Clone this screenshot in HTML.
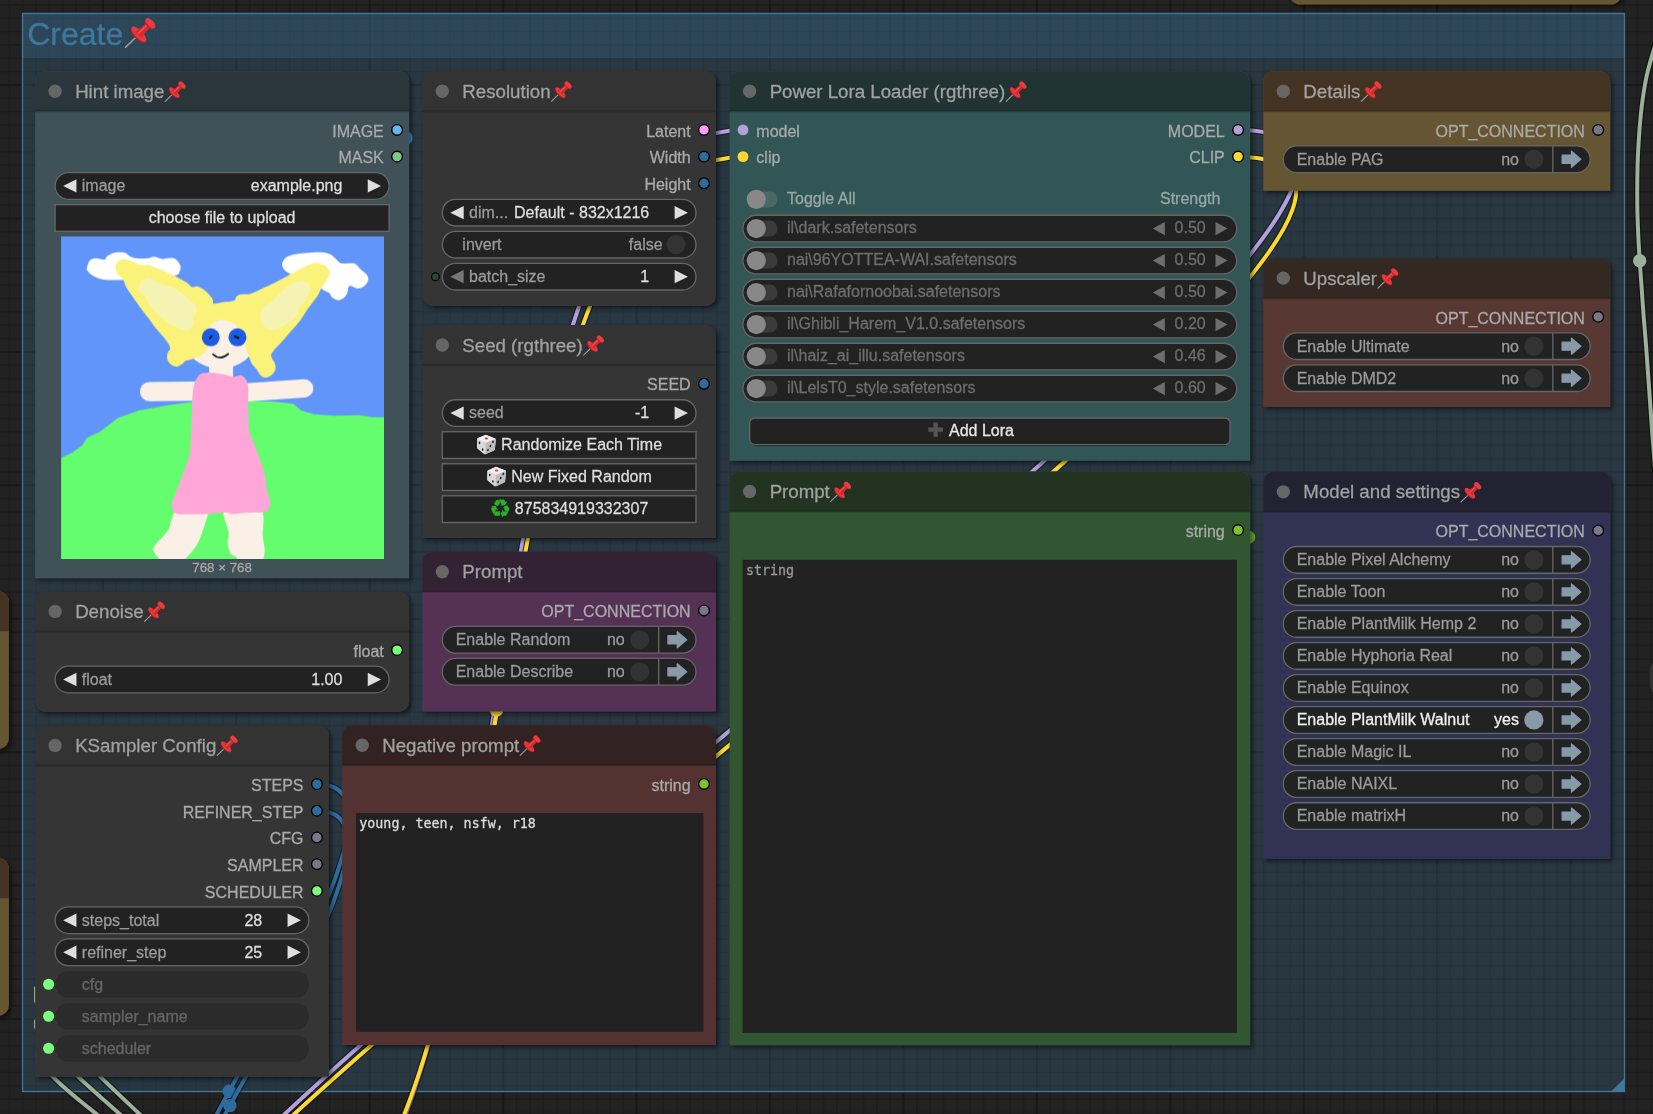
<!DOCTYPE html>
<html lang="en"><head><meta charset="utf-8"><title>ComfyUI - Create</title>
<style>html,body{margin:0;padding:0;background:#222;overflow:hidden}body{width:1653px;height:1114px}svg{display:block;will-change:transform}text{stroke-width:.28px;font-family:"Liberation Sans",Arial,sans-serif;white-space:pre}text.mono{font-family:"DejaVu Sans Mono","Liberation Mono",monospace}text.dj{font-family:"DejaVu Sans",sans-serif}</style></head>
<body>
<svg width="1653" height="1114" viewBox="0 0 1653 1114">
<defs><clipPath id="cl2"><rect x="36" y="0" width="1700" height="1200"/></clipPath><clipPath id="cl"><rect x="33.9" y="0" width="1700" height="1200"/></clipPath><filter id="sh" x="-5%" y="-5%" width="115%" height="115%" filterUnits="objectBoundingBox"><feDropShadow dx="2.67" dy="2.67" stdDeviation="2" flood-color="#000" flood-opacity=".5"/></filter></defs>
<rect width="1653" height="1114" fill="#222222"/>
<path d="M9.45 0V1114M22.79 0V1114M36.14 0V1114M49.48 0V1114M62.82 0V1114M76.17 0V1114M89.51 0V1114M116.2 0V1114M129.54 0V1114M142.89 0V1114M156.23 0V1114M169.57 0V1114M182.92 0V1114M196.26 0V1114M209.6 0V1114M222.95 0V1114M249.63 0V1114M262.98 0V1114M276.32 0V1114M289.66 0V1114M303.01 0V1114M316.35 0V1114M329.69 0V1114M343.04 0V1114M356.38 0V1114M383.07 0V1114M396.41 0V1114M409.76 0V1114M423.1 0V1114M436.44 0V1114M449.79 0V1114M463.13 0V1114M476.47 0V1114M489.82 0V1114M516.5 0V1114M529.85 0V1114M543.19 0V1114M556.53 0V1114M569.88 0V1114M583.22 0V1114M596.56 0V1114M609.91 0V1114M623.25 0V1114M649.94 0V1114M663.28 0V1114M676.62 0V1114M689.97 0V1114M703.31 0V1114M716.66 0V1114M730 0V1114M743.34 0V1114M756.69 0V1114M783.37 0V1114M796.72 0V1114M810.06 0V1114M823.4 0V1114M836.75 0V1114M850.09 0V1114M863.43 0V1114M876.78 0V1114M890.12 0V1114M916.81 0V1114M930.15 0V1114M943.49 0V1114M956.84 0V1114M970.18 0V1114M983.53 0V1114M996.87 0V1114M1010.21 0V1114M1023.56 0V1114M1050.24 0V1114M1063.59 0V1114M1076.93 0V1114M1090.27 0V1114M1103.62 0V1114M1116.96 0V1114M1130.3 0V1114M1143.65 0V1114M1156.99 0V1114M1183.68 0V1114M1197.02 0V1114M1210.36 0V1114M1223.71 0V1114M1237.05 0V1114M1250.4 0V1114M1263.74 0V1114M1277.08 0V1114M1290.43 0V1114M1317.11 0V1114M1330.46 0V1114M1343.8 0V1114M1357.14 0V1114M1370.49 0V1114M1383.83 0V1114M1397.17 0V1114M1410.52 0V1114M1423.86 0V1114M1450.55 0V1114M1463.89 0V1114M1477.23 0V1114M1490.58 0V1114M1503.92 0V1114M1517.27 0V1114M1530.61 0V1114M1543.95 0V1114M1557.3 0V1114M1583.98 0V1114M1597.33 0V1114M1610.67 0V1114M1624.01 0V1114M1637.36 0V1114M1650.7 0V1114M0 4.95H1653M0 18.29H1653M0 31.64H1653M0 44.98H1653M0 58.32H1653M0 71.67H1653M0 98.35H1653M0 111.7H1653M0 125.04H1653M0 138.39H1653M0 151.73H1653M0 165.07H1653M0 178.42H1653M0 191.76H1653M0 205.1H1653M0 231.79H1653M0 245.13H1653M0 258.48H1653M0 271.82H1653M0 285.16H1653M0 298.51H1653M0 311.85H1653M0 325.19H1653M0 338.54H1653M0 365.22H1653M0 378.57H1653M0 391.91H1653M0 405.26H1653M0 418.6H1653M0 431.94H1653M0 445.29H1653M0 458.63H1653M0 471.97H1653M0 498.66H1653M0 512H1653M0 525.35H1653M0 538.69H1653M0 552.03H1653M0 565.38H1653M0 578.72H1653M0 592.06H1653M0 605.41H1653M0 632.09H1653M0 645.44H1653M0 658.78H1653M0 672.12H1653M0 685.47H1653M0 698.81H1653M0 712.16H1653M0 725.5H1653M0 738.84H1653M0 765.53H1653M0 778.87H1653M0 792.22H1653M0 805.56H1653M0 818.9H1653M0 832.25H1653M0 845.59H1653M0 858.93H1653M0 872.28H1653M0 898.96H1653M0 912.31H1653M0 925.65H1653M0 938.99H1653M0 952.34H1653M0 965.68H1653M0 979.03H1653M0 992.37H1653M0 1005.71H1653M0 1032.4H1653M0 1045.74H1653M0 1059.09H1653M0 1072.43H1653M0 1085.77H1653M0 1099.12H1653M0 1112.46H1653" stroke="#1d1d1d" stroke-width="1.33" fill="none"/>
<path d="M102.85 0V1114M236.29 0V1114M369.72 0V1114M503.16 0V1114M636.59 0V1114M770.03 0V1114M903.46 0V1114M1036.9 0V1114M1170.33 0V1114M1303.77 0V1114M1437.2 0V1114M1570.64 0V1114M0 85.01H1653M0 218.45H1653M0 351.88H1653M0 485.32H1653M0 618.75H1653M0 752.19H1653M0 885.62H1653M0 1019.06H1653" stroke="#181818" stroke-width="2" fill="none"/>

<!-- group -->
<rect x="22.55" y="13.45" width="1601.9" height="44.83" fill="#3f789e" fill-opacity=".25"/>
<rect x="22.55" y="13.45" width="1601.9" height="1078.05" fill="#3f789e" fill-opacity=".25"/>
<rect x="22.55" y="13.45" width="1601.9" height="1078.05" fill="none" stroke="#3f789e" stroke-width="1.33"/>
<path d="M1624.45 1091.5h-13.34L1624.45 1078.16Z" fill="#3f789e"/>
<text x="27.22" y="44.8" font-size="32.02" fill="#3f789e" stroke="#3f789e">Create</text>
<g transform="translate(125.34,16.8) scale(1)"><g transform="translate(13.6 17.5) rotate(46)"><path d="M0 1L0 18.6" stroke="#98a1ab" stroke-width="1.6" stroke-linecap="round"/><ellipse cx="0" cy="1.3" rx="10" ry="3.9" fill="#b81c1c"/><ellipse cx="0" cy="0" rx="10" ry="3.9" fill="#e5393b"/><path d="M-4.6 0.6Q-2.6 -6 -3.4 -15L3.4 -15Q2.6 -6 4.6 0.6Z" fill="#d8282b"/><path d="M-1.9 0L-1.7 -15L-0.3 -15L-0.4 0Z" fill="#f47a7a" opacity=".6"/><ellipse cx="0" cy="-14.6" rx="6.3" ry="3.2" fill="#c42124"/><ellipse cx="0" cy="-16" rx="6.3" ry="3.2" fill="#ea3d40"/></g></g>

<!-- links -->
<g clip-path="url(#cl)">
<path d="M283.7 1293.6C380.85 1293.6 -48.55 984.2 48.6 984.2" fill="none" stroke="#000" stroke-opacity=".42" stroke-width="6.4" clip-path="url(#cl2)"/>
<path d="M283.7 1293.6C380.85 1293.6 -48.55 984.2 48.6 984.2" fill="none" stroke="#9cb09b" stroke-width="4"/>
<path d="M282.7 1290.8C372.95 1290.8 -41.65 1016 48.6 1016" fill="none" stroke="#000" stroke-opacity=".42" stroke-width="6.4" clip-path="url(#cl2)"/>
<path d="M282.7 1290.8C372.95 1290.8 -41.65 1016 48.6 1016" fill="none" stroke="#9cb09b" stroke-width="4"/>
<path d="M283 1286C366.51 1286 -34.91 1048 48.6 1048" fill="none" stroke="#000" stroke-opacity=".42" stroke-width="6.4" clip-path="url(#cl2)"/>
<path d="M283 1286C366.51 1286 -34.91 1048 48.6 1048" fill="none" stroke="#9cb09b" stroke-width="4"/>
</g>
<path d="M1664 20C1662.22 25.28 1656.18 42.38 1653.3 51.7C1650.42 61.02 1648.55 67.38 1646.7 75.9C1644.85 84.42 1643.4 93.82 1642.2 102.8C1641 111.78 1640.27 119.52 1639.5 129.8C1638.73 140.08 1637.97 151.8 1637.6 164.5C1637.23 177.2 1637.17 193.75 1637.3 206C1637.43 218.25 1638 228.88 1638.4 238C1638.8 247.12 1639.13 252.03 1639.7 260.7C1640.27 269.37 1641.18 281.28 1641.8 290C1642.42 298.72 1642.6 302.5 1643.4 313C1644.2 323.5 1645.12 332.83 1646.6 353C1648.08 373.17 1650.73 412.83 1652.3 434C1653.87 455.17 1655.38 472.33 1656 480" fill="none" stroke="#000" stroke-opacity=".42" stroke-width="6.4"/>
<path d="M1664 20C1662.22 25.28 1656.18 42.38 1653.3 51.7C1650.42 61.02 1648.55 67.38 1646.7 75.9C1644.85 84.42 1643.4 93.82 1642.2 102.8C1641 111.78 1640.27 119.52 1639.5 129.8C1638.73 140.08 1637.97 151.8 1637.6 164.5C1637.23 177.2 1637.17 193.75 1637.3 206C1637.43 218.25 1638 228.88 1638.4 238C1638.8 247.12 1639.13 252.03 1639.7 260.7C1640.27 269.37 1641.18 281.28 1641.8 290C1642.42 298.72 1642.6 302.5 1643.4 313C1644.2 323.5 1645.12 332.83 1646.6 353C1648.08 373.17 1650.73 412.83 1652.3 434C1653.87 455.17 1655.38 472.33 1656 480" fill="none" stroke="#9cb09b" stroke-width="4"/>
<circle cx="1639.7" cy="260.7" r="6.7" fill="#9cb09b"/>
<path d="M317 784.1C476.75 784.1 -18.35 1398.5 141.4 1398.5" fill="none" stroke="#000" stroke-opacity=".42" stroke-width="6.4"/>
<path d="M317 784.1C476.75 784.1 -18.35 1398.5 141.4 1398.5" fill="none" stroke="#2e6c9f" stroke-width="4"/>
<circle cx="229.2" cy="1091.3" r="6.7" fill="#2e6c9f"/>
<path d="M317 810.8C470.7 810.8 -10.9 1400.4 142.8 1400.4" fill="none" stroke="#000" stroke-opacity=".42" stroke-width="6.4"/>
<path d="M317 810.8C470.7 810.8 -10.9 1400.4 142.8 1400.4" fill="none" stroke="#2e6c9f" stroke-width="4"/>
<circle cx="229.9" cy="1105.6" r="6.7" fill="#2e6c9f"/>
<circle cx="405" cy="138" r="7.6" fill="#3f8fcc"/>
<circle cx="1248.5" cy="537.3" r="6.7" fill="#6fb025"/>
<path d="M248.9 1270.9C559.72 1270.9 432.18 130 743 130" fill="none" stroke="#000" stroke-opacity=".42" stroke-width="6.4"/>
<path d="M248.9 1270.9C559.72 1270.9 432.18 130 743 130" fill="none" stroke="#b39fda" stroke-width="4"/>
<path d="M1238 130C1655.09 130 -269.29 1392.9 147.8 1392.9" fill="none" stroke="#000" stroke-opacity=".42" stroke-width="6.4"/>
<path d="M1238 130C1655.09 130 -269.29 1392.9 147.8 1392.9" fill="none" stroke="#b39fda" stroke-width="4"/>
<path d="M1238 157C1648.23 157 -256.33 1388.8 153.9 1388.8" fill="none" stroke="#000" stroke-opacity=".42" stroke-width="6.4"/>
<path d="M1238 157C1648.23 157 -256.33 1388.8 153.9 1388.8" fill="none" stroke="#fdd830" stroke-width="4"/>
<path d="M251.3 1263.3C553.96 1263.3 440.34 157 743 157" fill="none" stroke="#000" stroke-opacity=".42" stroke-width="6.4"/>
<path d="M251.3 1263.3C553.96 1263.3 440.34 157 743 157" fill="none" stroke="#fdd830" stroke-width="4"/>
<circle cx="496.5" cy="710" r="6.7" fill="#fdd830"/>

<!-- nodes -->
<path d="M-189.33 591.3H-1.77A10.67 10.67 0 0 1 8.9 601.97V738.13A10.67 10.67 0 0 1 -1.77 748.8H-189.33A10.67 10.67 0 0 1 -200 738.13V601.97A10.67 10.67 0 0 1 -189.33 591.3Z" fill="#665533" filter="url(#sh)"/>
<path d="M-189.33 591.3H-1.77A10.67 10.67 0 0 1 8.9 601.97V631.33H-200V601.97A10.67 10.67 0 0 1 -189.33 591.3Z" fill="#443322"/>
<path d="M-189.33 858.1H-1.77A10.67 10.67 0 0 1 8.9 868.77V1004.93A10.67 10.67 0 0 1 -1.77 1015.6H-189.33A10.67 10.67 0 0 1 -200 1004.93V868.77A10.67 10.67 0 0 1 -189.33 858.1Z" fill="#665533" filter="url(#sh)"/>
<path d="M-189.33 858.1H-1.77A10.67 10.67 0 0 1 8.9 868.77V898.13H-200V868.77A10.67 10.67 0 0 1 -189.33 858.1Z" fill="#443322"/>
<path d="M1300.17 -300H1610.83A10.67 10.67 0 0 1 1621.5 -289.33V-6.07A10.67 10.67 0 0 1 1610.83 4.6H1300.17A10.67 10.67 0 0 1 1289.5 -6.07V-289.33A10.67 10.67 0 0 1 1300.17 -300Z" fill="#665533" filter="url(#sh)"/>
<path d="M1300.17 -300H1610.83A10.67 10.67 0 0 1 1621.5 -289.33V-259.97H1289.5V-289.33A10.67 10.67 0 0 1 1300.17 -300Z" fill="#443322"/>
<rect x="1649.8" y="657.5" width="60" height="40" rx="14" fill="#333" filter="url(#sh)"/>
<path d="M45.77 71.2H398.43A10.67 10.67 0 0 1 409.1 81.87V578.3H35.1V81.87A10.67 10.67 0 0 1 45.77 71.2Z" fill="#3f5159" filter="url(#sh)"/>
<path d="M45.77 71.2H398.43A10.67 10.67 0 0 1 409.1 81.87V111.23H35.1V81.87A10.67 10.67 0 0 1 45.77 71.2Z" fill="#2a363b"/>
<rect x="35.1" y="110.13" width="374" height="2.2" fill="#000" fill-opacity=".17"/>
<circle cx="55.11" cy="91.21" r="6.67" fill="#666"/>
<text x="75.13" y="97.89" font-size="18.68" fill="#a2a2a2" stroke="#a2a2a2">Hint image</text>
<g transform="translate(165.12,80.59) scale(0.68)"><g transform="translate(13.6 17.5) rotate(46)"><path d="M0 1L0 18.6" stroke="#98a1ab" stroke-width="1.6" stroke-linecap="round"/><ellipse cx="0" cy="1.3" rx="10" ry="3.9" fill="#b81c1c"/><ellipse cx="0" cy="0" rx="10" ry="3.9" fill="#e5393b"/><path d="M-4.6 0.6Q-2.6 -6 -3.4 -15L3.4 -15Q2.6 -6 4.6 0.6Z" fill="#d8282b"/><path d="M-1.9 0L-1.7 -15L-0.3 -15L-0.4 0Z" fill="#f47a7a" opacity=".6"/><ellipse cx="0" cy="-14.6" rx="6.3" ry="3.2" fill="#c42124"/><ellipse cx="0" cy="-16" rx="6.3" ry="3.2" fill="#ea3d40"/></g></g>
<circle cx="397.1" cy="129.91" r="5.34" fill="#67b5f5" stroke="#000" stroke-width="1.33"/>
<text x="383.76" y="136.66" font-size="16.01" fill="#aaaaaa" stroke="#aaaaaa" text-anchor="end">IMAGE</text>
<circle cx="397.1" cy="156.6" r="5.34" fill="#83c786" stroke="#000" stroke-width="1.33"/>
<text x="383.76" y="163.35" font-size="16.01" fill="#aaaaaa" stroke="#aaaaaa" text-anchor="end">MASK</text>
<rect x="55.11" y="172.61" width="333.97" height="26.69" rx="13.34" fill="#222222" stroke="#666666" stroke-width="1.33"/>
<path d="M76.46 179.28L63.12 185.95L76.46 192.62Z" fill="#dedede"/>
<path d="M367.74 179.28L381.08 185.95L367.74 192.62Z" fill="#dedede"/>
<text x="81.8" y="191.29" font-size="16.01" fill="#9b9b9b" stroke="#9b9b9b">image</text>
<text x="342.38" y="191.29" font-size="16.01" fill="#dedede" stroke="#dedede" text-anchor="end">example.png</text>
<rect x="55.11" y="204.63" width="333.97" height="26.69" fill="#222222" stroke="#666666" stroke-width="1.33"/>
<text x="222.1" y="223.31" font-size="16.01" fill="#dedede" stroke="#dedede" text-anchor="middle">choose file to upload</text>
<svg x="61.1" y="236.5" width="322.2" height="322.2" viewBox="0 0 322 322"><rect width="322" height="322" fill="#6195f9"/><path d="M26 30.4C26.43 28.7 27.45 25.25 28.9 23.8C30.35 22.35 32.28 21.82 34.7 21.7C37.12 21.58 41.48 23.47 43.4 23.1C45.32 22.73 44.52 20.65 46.2 19.5C47.88 18.35 50.6 16.75 53.5 16.2C56.4 15.65 60.95 15.53 63.6 16.2C66.25 16.87 67.47 19.28 69.4 20.2C71.33 21.12 72.32 21.45 75.2 21.7C78.08 21.95 83.82 21.95 86.7 21.7C89.58 21.45 90.08 20.08 92.5 20.2C94.92 20.32 98.78 22.15 101.2 22.4C103.62 22.65 104.83 21.7 107 21.7C109.17 21.7 112.17 21.2 114.2 22.4C116.23 23.6 118.48 26.85 119.2 28.9C119.92 30.95 119.33 33.07 118.5 34.7C117.67 36.33 118.95 37.82 114.2 38.7C109.45 39.58 99.03 39.22 90 40C80.97 40.78 68.25 42.97 60 43.4C51.75 43.83 45.43 43.45 40.5 42.6C35.57 41.75 32.77 39.73 30.4 38.3C28.03 36.87 27.03 35.32 26.3 34C25.57 32.68 25.57 32.1 26 30.4Z" fill="#fff"/><path d="M221 28.9C220.57 27.03 221.32 25.37 222.4 23.8C223.48 22.23 224.73 20.62 227.5 19.5C230.27 18.38 235.15 17.7 239 17.1C242.85 16.5 246.73 16.1 250.6 15.9C254.47 15.7 259.07 15.53 262.2 15.9C265.33 16.27 267.23 16.9 269.4 18.1C271.57 19.3 273.52 21.67 275.2 23.1C276.88 24.53 277.33 26.1 279.5 26.7C281.67 27.3 285.78 26.57 288.2 26.7C290.62 26.83 292.08 26.42 294 27.5C295.92 28.58 297.78 31.4 299.7 33.2C301.62 35 304.28 36.6 305.5 38.3C306.72 40 307.35 41.6 307 43.4C306.65 45.2 305.08 47.67 303.4 49.1C301.72 50.53 298.95 51.87 296.9 52C294.85 52.13 292.67 50.25 291.1 49.9C289.53 49.55 288.35 48.82 287.5 49.9C286.65 50.98 286.85 54.48 286 56.4C285.15 58.32 283.97 60.2 282.4 61.4C280.83 62.6 278.53 63.72 276.6 63.6C274.67 63.48 272.25 61.9 270.8 60.7C269.35 59.5 269.33 57.6 267.9 56.4C266.47 55.2 265.18 55.4 262.2 53.5C259.22 51.6 254.53 47.25 250 45C245.47 42.75 239.17 41.67 235 40C230.83 38.33 227.33 36.85 225 35C222.67 33.15 221.43 30.77 221 28.9Z" fill="#fff"/><polygon points="-3,222.3 0,222.3 11.7,216.5 21.4,209.6 26.3,201.9 39,196 56.5,182.4 77.9,174.6 105.2,169.7 132.4,165.8 187,164.8 214.3,165.8 231.8,167.8 239.6,174.6 253.2,178.5 272.7,180 298,179.5 311.6,181.4 322,181.4 326,181.4 326,326 -3,326" fill="#64fd6e" stroke="#64fd6e" stroke-width="1.5" stroke-linejoin="round"/><path d="M114.9 275C109.7 277.59 109.95 288.87 107.1 293.4C104.25 297.93 95.45 306.15 93.5 309C91.55 311.85 91.98 313.12 92.5 314.8C93.02 316.48 95.87 320.11 97.4 321.6C98.93 323.09 100.99 325.41 104 326C107.01 326.59 117.24 326.59 120 326C122.76 325.41 123.05 323.35 124.7 321.6C126.35 319.85 130.59 315.37 132.4 312.9C134.21 310.43 136.47 307.51 138.3 303.1C140.13 298.69 145.06 283.68 146.1 279.8C147.14 275.92 150.26 274.64 146.1 274C141.94 273.36 120.1 272.41 114.9 275Z" fill="#faf0e6"/><path d="M163.6 273C159.32 275.97 167.11 290.77 167.5 295.3C167.89 299.83 166.23 304.13 166.5 307C166.77 309.87 168.33 314.97 169.5 316.8C170.67 318.63 173.9 319.47 175.3 320.7C176.7 321.93 176.71 325.29 180 326C183.29 326.71 196.99 326.71 200 326C203.01 325.29 202.13 322.45 202.6 320.7C203.07 318.95 203.63 315.77 203.5 312.9C203.37 310.03 202.12 304.52 201.6 299.2C201.08 293.88 204.67 276.49 199.6 273C194.53 269.51 167.88 270.03 163.6 273Z" fill="#faf0e6"/><path d="M88.4 155L136 154.5" stroke="#faf0e6" stroke-width="19.3" stroke-linecap="round"/><path d="M186 155.8L243 151.8" stroke="#faf0e6" stroke-width="18.2" stroke-linecap="round"/><rect x="148" y="120" width="23.8" height="26" fill="#faf0e6"/><ellipse cx="159" cy="102" rx="36" ry="30" fill="#faf0e6"/><path d="M132.5 150C132.87 148.02 133.76 145.34 134.4 144C135.04 142.66 137.07 139.38 138 138.5C138.93 137.62 140.97 136.8 142.4 136.5C143.84 136.2 148.13 135.78 150.3 135.9C152.47 136.02 158.4 137 161 137.5C163.6 138 170.41 140.06 172.6 140.2C174.79 140.34 178.38 138.36 179.8 138.7C181.22 139.04 183.96 141.75 184.8 143.1C185.64 144.45 186.74 147.08 187 150.3C187.26 153.52 186.88 165.59 187 170.7C187.12 175.81 187.09 189.33 188 194.1C188.91 198.87 192.99 206.61 194.8 211.6C196.61 216.59 202.25 232.13 203.5 236.9C204.75 241.67 204.93 249.55 205.5 252.5C206.07 255.45 207.94 260.38 208.4 262.2C208.86 264.02 209.62 266.84 209.4 268.1C209.18 269.36 207.19 272.14 206.5 273C205.81 273.86 204.87 275.16 203.5 275.5C202.13 275.84 197.19 275.81 194.8 275.9C192.41 275.99 185.73 276.12 183 276.3C180.27 276.48 173.43 277.45 171.4 277.4C169.37 277.35 167.51 276 165.6 275.9C163.69 275.79 157.51 276.32 155 276.5C152.49 276.68 147.02 277.27 144.1 277.4C141.18 277.53 133.17 277.6 130 277.6C126.83 277.6 118.94 277.7 116.9 277.4C114.86 277.1 113.19 275.63 112.5 275C111.81 274.37 111.17 273.14 111 272C110.83 270.86 110.31 267.71 111 265.2C111.69 262.69 115.3 254.71 116.9 250.5C118.5 246.29 123.34 232.96 124.7 229.1C126.06 225.24 127.92 222.63 128.6 217.4C129.28 212.17 130.2 190.88 130.5 184.3C130.8 177.72 130.97 165 131.2 161C131.43 157 132.13 151.98 132.5 150Z" fill="#fea6d8"/><path d="M54.2 31.07C54.2 29.23 55.17 26.53 56.37 25.29C57.56 24.06 60.41 23.05 62.15 22.84C63.88 22.62 65.98 23.26 67.93 23.85C69.88 24.43 73.2 25.98 75.16 26.74C77.11 27.5 79.2 28.69 80.94 28.91C82.67 29.12 84.77 27.86 86.72 28.18C88.67 28.51 91.34 30.1 93.94 31.07C96.55 32.05 100.81 33.28 104.06 34.69C107.31 36.1 112.37 38.73 115.62 40.47C118.88 42.2 123.46 44.73 125.74 46.25C128.02 47.77 129.17 50.04 130.8 50.59C132.43 51.13 134.74 49.43 136.58 49.86C138.42 50.3 141.24 52.07 143.08 53.48C144.93 54.89 147.56 57.74 148.87 59.26C150.17 60.77 151.21 62.4 151.76 63.59C152.3 64.79 151.09 66.88 152.48 67.21C153.87 67.53 157.99 66.19 161.01 65.76C164.02 65.33 170.4 65.18 172.56 64.32C174.73 63.45 174.37 60.96 175.45 59.98C176.54 59 177.62 58.25 179.79 57.81C181.96 57.38 186.22 58.17 189.91 57.09C193.59 56.01 199.59 52.86 204.36 50.59C209.13 48.31 216.93 44.41 221.7 41.91C226.47 39.42 232.25 36.02 236.16 33.96C240.06 31.9 244.9 29.27 247.72 28.18C250.54 27.1 252.78 26.74 254.94 26.74C257.11 26.74 260.33 27.32 262.17 28.18C264.01 29.05 266.32 31 267.23 32.52C268.14 34.04 268.57 36.46 268.24 38.3C267.92 40.14 266.19 42.96 265.06 44.8C263.93 46.65 262.03 48.42 260.73 50.59C259.42 52.75 258.34 56.22 256.39 59.26C254.44 62.29 250.32 67.13 247.72 70.82C245.12 74.5 241.65 80.36 239.05 83.83C236.44 87.3 232.98 90.91 230.37 93.94C227.77 96.98 224.74 100.48 221.7 104.06C218.67 107.64 211.33 114.32 210.14 117.79C208.95 121.26 213.15 124.91 213.75 127.19C214.36 129.46 214.62 131.34 214.19 132.97C213.75 134.59 212.12 136.83 210.86 138.03C209.61 139.22 207.43 140.7 205.8 140.92C204.18 141.13 201.65 140.77 200.02 139.47C198.4 138.17 196.37 134.09 194.96 132.24C193.56 130.4 191.71 129.03 190.63 127.19C189.54 125.34 188.61 122.34 187.74 119.96C186.87 117.57 185.61 114.11 184.85 111.29C184.09 108.47 183.87 104.21 182.68 101.17C181.49 98.14 178.85 93.39 176.9 91.05C174.95 88.71 172.06 86.69 169.67 85.56C167.29 84.43 163.04 83.69 161 83.54C158.96 83.39 157.48 84.07 156.09 84.55C154.71 85.03 153.06 85.53 151.76 86.72C150.46 87.91 148.5 89.9 147.42 92.5C146.34 95.1 144.75 101.24 144.53 104.06C144.31 106.88 146.3 109.34 145.97 111.29C145.65 113.24 143.88 115.66 142.36 117.07C140.84 118.48 137.7 119.82 135.86 120.68C134.02 121.55 131.81 122.31 130.08 122.85C128.34 123.39 125.6 123.65 124.3 124.3C122.99 124.95 122.71 126.32 121.4 127.19C120.1 128.05 117.36 129.97 115.62 130.08C113.89 130.18 111.25 128.99 109.84 127.91C108.43 126.82 106.77 124.48 106.23 122.85C105.69 121.22 105.8 118.8 106.23 117.07C106.66 115.33 109.45 113.46 109.12 111.29C108.79 109.12 106.12 105.43 104.06 102.62C102 99.8 97.99 95.75 95.39 92.5C92.79 89.25 89.32 84.41 86.72 80.94C84.12 77.47 80.43 72.63 78.05 69.37C75.66 66.12 72.77 62.08 70.82 59.26C68.87 56.44 66.34 52.97 65.04 50.59C63.74 48.2 63.45 45.31 62.15 43.36C60.85 41.41 57.56 39.42 56.37 37.58C55.17 35.73 54.2 32.92 54.2 31.07Z" fill="#fbf27a"/><path d="M78.05 49.14C78.41 47.33 79.49 45.29 80.94 44.08C82.38 42.88 84.79 42.03 86.72 41.91C88.64 41.79 90.57 42.52 92.5 43.36C94.43 44.2 95.39 45.77 98.28 46.97C101.17 48.18 106.47 49.26 109.84 50.59C113.21 51.91 115.62 52.99 118.51 54.92C121.4 56.85 124.54 59.74 127.19 62.15C129.84 64.56 133.09 67.21 134.41 69.37C135.74 71.54 135.5 73.11 135.14 75.16C134.77 77.2 132.61 79.73 132.24 81.66C131.88 83.59 133.45 84.91 132.97 86.72C132.49 88.52 131.04 91.29 129.35 92.5C127.67 93.7 125.14 94.19 122.85 93.94C120.56 93.7 118.76 92.74 115.62 91.05C112.49 89.37 107.67 86.48 104.06 83.83C100.45 81.18 96.83 78.29 93.94 75.16C91.05 72.02 88.4 67.69 86.72 65.04C85.03 62.39 85.15 60.94 83.83 59.26C82.5 57.57 79.73 56.61 78.77 54.92C77.81 53.24 77.68 50.95 78.05 49.14Z" fill="#f5f3b4"/><path d="M199.3 76.6C199.97 74.67 201.11 72.75 202.91 70.82C204.72 68.89 207.49 67.45 210.14 65.04C212.79 62.63 215.92 59.02 218.81 56.37C221.7 53.72 224.59 51.07 227.48 49.14C230.37 47.21 233.75 45.65 236.16 44.8C238.56 43.96 240.13 43.72 241.94 44.08C243.74 44.44 245.84 45.53 247 46.97C248.15 48.42 248.99 50.46 248.87 52.75C248.75 55.04 247.43 58.41 246.27 60.7C245.12 62.99 243.38 64.68 241.94 66.48C240.49 68.29 238.56 69.62 237.6 71.54C236.64 73.47 237.36 76 236.16 78.05C234.95 80.09 232.78 81.9 230.37 83.83C227.97 85.75 224.11 88.16 221.7 89.61C219.29 91.05 218.33 92.02 215.92 92.5C213.51 92.98 209.66 93.22 207.25 92.5C204.84 91.78 202.87 89.85 201.47 88.16C200.07 86.48 199.23 84.31 198.87 82.38C198.51 80.45 198.63 78.53 199.3 76.6Z" fill="#f5f3b4"/><circle cx="149.6" cy="100.7" r="9" fill="#1c5be3"/><circle cx="176.3" cy="100.7" r="9" fill="#1c5be3"/><path d="M148.7 101.9L150.5 99.5" stroke="#111" stroke-width="1.6" stroke-linecap="round"/><path d="M173.8 99.9L177.2 101.4" stroke="#111" stroke-width="2.2" stroke-linecap="round"/><path d="M151.9 117.8Q158.9 124.6 167.1 117.4" stroke="#111" stroke-width="1.7" fill="none" stroke-linecap="round"/></svg>
<text x="222.1" y="571.9" font-size="13.34" fill="#aaaaaa" stroke="#aaaaaa" text-anchor="middle">768 × 768</text>
<path d="M432.97 71.2H705.33A10.67 10.67 0 0 1 716 81.87V295.23A10.67 10.67 0 0 1 705.33 305.9H432.97A10.67 10.67 0 0 1 422.3 295.23V81.87A10.67 10.67 0 0 1 432.97 71.2Z" fill="#353535" filter="url(#sh)"/>
<path d="M432.97 71.2H705.33A10.67 10.67 0 0 1 716 81.87V111.23H422.3V81.87A10.67 10.67 0 0 1 432.97 71.2Z" fill="#333333"/>
<rect x="422.3" y="110.13" width="293.7" height="2.2" fill="#000" fill-opacity=".17"/>
<circle cx="442.31" cy="91.21" r="6.67" fill="#666"/>
<text x="462.33" y="97.89" font-size="18.68" fill="#a2a2a2" stroke="#a2a2a2">Resolution</text>
<g transform="translate(551.3,80.59) scale(0.68)"><g transform="translate(13.6 17.5) rotate(46)"><path d="M0 1L0 18.6" stroke="#98a1ab" stroke-width="1.6" stroke-linecap="round"/><ellipse cx="0" cy="1.3" rx="10" ry="3.9" fill="#b81c1c"/><ellipse cx="0" cy="0" rx="10" ry="3.9" fill="#e5393b"/><path d="M-4.6 0.6Q-2.6 -6 -3.4 -15L3.4 -15Q2.6 -6 4.6 0.6Z" fill="#d8282b"/><path d="M-1.9 0L-1.7 -15L-0.3 -15L-0.4 0Z" fill="#f47a7a" opacity=".6"/><ellipse cx="0" cy="-14.6" rx="6.3" ry="3.2" fill="#c42124"/><ellipse cx="0" cy="-16" rx="6.3" ry="3.2" fill="#ea3d40"/></g></g>
<circle cx="704" cy="129.91" r="5.34" fill="#fc9ef7" stroke="#000" stroke-width="1.33"/>
<text x="690.66" y="136.66" font-size="16.01" fill="#aaaaaa" stroke="#aaaaaa" text-anchor="end">Latent</text>
<circle cx="704" cy="156.6" r="5.34" fill="#2e6c9f" stroke="#000" stroke-width="1.33"/>
<text x="690.66" y="163.35" font-size="16.01" fill="#aaaaaa" stroke="#aaaaaa" text-anchor="end">Width</text>
<circle cx="704" cy="183.28" r="5.34" fill="#2e6c9f" stroke="#000" stroke-width="1.33"/>
<text x="690.66" y="190.03" font-size="16.01" fill="#aaaaaa" stroke="#aaaaaa" text-anchor="end">Height</text>
<rect x="442.31" y="199.29" width="253.67" height="26.69" rx="13.34" fill="#222222" stroke="#666666" stroke-width="1.33"/>
<path d="M463.66 205.96L450.32 212.64L463.66 219.31Z" fill="#dedede"/>
<path d="M674.64 205.96L687.98 212.64L674.64 219.31Z" fill="#dedede"/>
<text x="469" y="217.97" font-size="16.01" fill="#9b9b9b" stroke="#9b9b9b">dim...</text>
<text x="649.28" y="217.97" font-size="16.01" fill="#dedede" stroke="#dedede" text-anchor="end">Default - 832x1216</text>
<rect x="442.31" y="231.32" width="253.67" height="26.69" rx="13.34" fill="#222222" stroke="#666666" stroke-width="1.33"/>
<text x="462.33" y="250" font-size="16.01" fill="#9b9b9b" stroke="#9b9b9b">invert</text>
<circle cx="675.97" cy="244.66" r="9.61" fill="#333"/>
<text x="662.63" y="250" font-size="16.01" fill="#9b9b9b" stroke="#9b9b9b" text-anchor="end">false</text>
<rect x="442.31" y="263.34" width="253.67" height="26.69" rx="13.34" fill="#222222" stroke="#666666" stroke-width="1.33"/>
<path d="M463.66 270.01L450.32 276.68L463.66 283.35Z" fill="#777"/>
<path d="M674.64 270.01L687.98 276.68L674.64 283.35Z" fill="#dedede"/>
<text x="469" y="282.02" font-size="16.01" fill="#9b9b9b" stroke="#9b9b9b">batch_size</text>
<text x="649.28" y="282.02" font-size="16.01" fill="#dedede" stroke="#dedede" text-anchor="end">1</text>
<circle cx="435.4" cy="276.7" r="3.9" fill="#2d4a30" stroke="#050505" stroke-width="1.3"/>
<path d="M740.27 71.2H1239.43A10.67 10.67 0 0 1 1250.1 81.87V460.75H729.6V81.87A10.67 10.67 0 0 1 740.27 71.2Z" fill="#335555" filter="url(#sh)"/>
<path d="M740.27 71.2H1239.43A10.67 10.67 0 0 1 1250.1 81.87V111.23H729.6V81.87A10.67 10.67 0 0 1 740.27 71.2Z" fill="#223333"/>
<rect x="729.6" y="110.13" width="520.5" height="2.2" fill="#000" fill-opacity=".17"/>
<circle cx="749.61" cy="91.21" r="6.67" fill="#666"/>
<text x="769.63" y="97.89" font-size="18.68" fill="#a2a2a2" stroke="#a2a2a2">Power Lora Loader (rgthree)</text>
<g transform="translate(1006.04,80.59) scale(0.68)"><g transform="translate(13.6 17.5) rotate(46)"><path d="M0 1L0 18.6" stroke="#98a1ab" stroke-width="1.6" stroke-linecap="round"/><ellipse cx="0" cy="1.3" rx="10" ry="3.9" fill="#b81c1c"/><ellipse cx="0" cy="0" rx="10" ry="3.9" fill="#e5393b"/><path d="M-4.6 0.6Q-2.6 -6 -3.4 -15L3.4 -15Q2.6 -6 4.6 0.6Z" fill="#d8282b"/><path d="M-1.9 0L-1.7 -15L-0.3 -15L-0.4 0Z" fill="#f47a7a" opacity=".6"/><ellipse cx="0" cy="-14.6" rx="6.3" ry="3.2" fill="#c42124"/><ellipse cx="0" cy="-16" rx="6.3" ry="3.2" fill="#ea3d40"/></g></g>
<circle cx="743" cy="129.91" r="5.44" fill="#b39fda"/>
<text x="756.34" y="136.66" font-size="16.01" fill="#aaaaaa" stroke="#aaaaaa">model</text>
<circle cx="743" cy="156.6" r="5.44" fill="#fdd830"/>
<text x="756.34" y="163.35" font-size="16.01" fill="#aaaaaa" stroke="#aaaaaa">clip</text>
<circle cx="1238.1" cy="129.91" r="5.34" fill="#b39fda" stroke="#000" stroke-width="1.33"/>
<text x="1224.76" y="136.66" font-size="16.01" fill="#aaaaaa" stroke="#aaaaaa" text-anchor="end">MODEL</text>
<circle cx="1238.1" cy="156.6" r="5.34" fill="#fdd830" stroke="#000" stroke-width="1.33"/>
<text x="1224.76" y="163.35" font-size="16.01" fill="#aaaaaa" stroke="#aaaaaa" text-anchor="end">CLIP</text>
<rect x="748.28" y="191.39" width="29.35" height="16.01" rx="8.01" fill="#fff" fill-opacity=".1125"/>
<circle cx="756.29" cy="199.4" r="9.61" fill="#888"/>
<text x="787" y="204" font-size="16.01" fill="#dddddd" stroke="#dddddd" opacity=".6">Toggle All</text>
<text x="1190.2" y="204" font-size="16.01" fill="#dddddd" stroke="#dddddd" text-anchor="middle" opacity=".6">Strength</text>
<rect x="742.94" y="215.21" width="493.81" height="26.69" rx="13.34" fill="#222222" stroke="#666666" stroke-width="1.33"/>
<rect x="748.28" y="220.54" width="29.35" height="16.01" rx="8.01" fill="#fff" fill-opacity=".1125"/>
<circle cx="756.29" cy="228.55" r="9.61" fill="#888"/>
<text x="787" y="233.15" font-size="16.01" fill="#6e6e6e" stroke="#6e6e6e">il\dark.safetensors</text>
<path d="M1227.5 228.55l-12.01 6.67v-13.34Z" fill="#6e6e6e"/>
<path d="M1152.78 228.55l12.01 6.67v-13.34Z" fill="#6e6e6e"/>
<text x="1190.14" y="233.15" font-size="16.01" fill="#6e6e6e" stroke="#6e6e6e" text-anchor="middle">0.50</text>
<rect x="742.94" y="247.21" width="493.81" height="26.69" rx="13.34" fill="#222222" stroke="#666666" stroke-width="1.33"/>
<rect x="748.28" y="252.54" width="29.35" height="16.01" rx="8.01" fill="#fff" fill-opacity=".1125"/>
<circle cx="756.29" cy="260.55" r="9.61" fill="#888"/>
<text x="787" y="265.15" font-size="16.01" fill="#6e6e6e" stroke="#6e6e6e">nai\96YOTTEA-WAI.safetensors</text>
<path d="M1227.5 260.55l-12.01 6.67v-13.34Z" fill="#6e6e6e"/>
<path d="M1152.78 260.55l12.01 6.67v-13.34Z" fill="#6e6e6e"/>
<text x="1190.14" y="265.15" font-size="16.01" fill="#6e6e6e" stroke="#6e6e6e" text-anchor="middle">0.50</text>
<rect x="742.94" y="279.21" width="493.81" height="26.69" rx="13.34" fill="#222222" stroke="#666666" stroke-width="1.33"/>
<rect x="748.28" y="284.54" width="29.35" height="16.01" rx="8.01" fill="#fff" fill-opacity=".1125"/>
<circle cx="756.29" cy="292.55" r="9.61" fill="#888"/>
<text x="787" y="297.15" font-size="16.01" fill="#6e6e6e" stroke="#6e6e6e">nai\Rafafornoobai.safetensors</text>
<path d="M1227.5 292.55l-12.01 6.67v-13.34Z" fill="#6e6e6e"/>
<path d="M1152.78 292.55l12.01 6.67v-13.34Z" fill="#6e6e6e"/>
<text x="1190.14" y="297.15" font-size="16.01" fill="#6e6e6e" stroke="#6e6e6e" text-anchor="middle">0.50</text>
<rect x="742.94" y="311.21" width="493.81" height="26.69" rx="13.34" fill="#222222" stroke="#666666" stroke-width="1.33"/>
<rect x="748.28" y="316.54" width="29.35" height="16.01" rx="8.01" fill="#fff" fill-opacity=".1125"/>
<circle cx="756.29" cy="324.55" r="9.61" fill="#888"/>
<text x="787" y="329.15" font-size="16.01" fill="#6e6e6e" stroke="#6e6e6e">il\Ghibli_Harem_V1.0.safetensors</text>
<path d="M1227.5 324.55l-12.01 6.67v-13.34Z" fill="#6e6e6e"/>
<path d="M1152.78 324.55l12.01 6.67v-13.34Z" fill="#6e6e6e"/>
<text x="1190.14" y="329.15" font-size="16.01" fill="#6e6e6e" stroke="#6e6e6e" text-anchor="middle">0.20</text>
<rect x="742.94" y="343.21" width="493.81" height="26.69" rx="13.34" fill="#222222" stroke="#666666" stroke-width="1.33"/>
<rect x="748.28" y="348.54" width="29.35" height="16.01" rx="8.01" fill="#fff" fill-opacity=".1125"/>
<circle cx="756.29" cy="356.55" r="9.61" fill="#888"/>
<text x="787" y="361.15" font-size="16.01" fill="#6e6e6e" stroke="#6e6e6e">il\haiz_ai_illu.safetensors</text>
<path d="M1227.5 356.55l-12.01 6.67v-13.34Z" fill="#6e6e6e"/>
<path d="M1152.78 356.55l12.01 6.67v-13.34Z" fill="#6e6e6e"/>
<text x="1190.14" y="361.15" font-size="16.01" fill="#6e6e6e" stroke="#6e6e6e" text-anchor="middle">0.46</text>
<rect x="742.94" y="375.21" width="493.81" height="26.69" rx="13.34" fill="#222222" stroke="#666666" stroke-width="1.33"/>
<rect x="748.28" y="380.54" width="29.35" height="16.01" rx="8.01" fill="#fff" fill-opacity=".1125"/>
<circle cx="756.29" cy="388.55" r="9.61" fill="#888"/>
<text x="787" y="393.15" font-size="16.01" fill="#6e6e6e" stroke="#6e6e6e">il\LelsT0_style.safetensors</text>
<path d="M1227.5 388.55l-12.01 6.67v-13.34Z" fill="#6e6e6e"/>
<path d="M1152.78 388.55l12.01 6.67v-13.34Z" fill="#6e6e6e"/>
<text x="1190.14" y="393.15" font-size="16.01" fill="#6e6e6e" stroke="#6e6e6e" text-anchor="middle">0.60</text>
<rect x="750.91" y="419.4" width="477.87" height="26.69" rx="5.3" fill="#000" fill-opacity=".66"/>
<rect x="749.61" y="418" width="480.47" height="26.69" rx="5.3" fill="#222222" stroke="#666666" stroke-width="1.33"/>
<path d="M928.3 429.6h14.6M935.6 422.4v14.4" stroke="#555" stroke-width="4.3"/>
<text x="949" y="436" font-size="16.01" fill="#e8e8e8" stroke="#e8e8e8">Add Lora</text>
<path d="M1273.97 71.2H1599.53A10.67 10.67 0 0 1 1610.2 81.87V190.7H1263.3V81.87A10.67 10.67 0 0 1 1273.97 71.2Z" fill="#665533" filter="url(#sh)"/>
<path d="M1273.97 71.2H1599.53A10.67 10.67 0 0 1 1610.2 81.87V111.23H1263.3V81.87A10.67 10.67 0 0 1 1273.97 71.2Z" fill="#443322"/>
<rect x="1263.3" y="110.13" width="346.9" height="2.2" fill="#000" fill-opacity=".17"/>
<circle cx="1283.31" cy="91.21" r="6.67" fill="#666"/>
<text x="1303.33" y="97.89" font-size="18.68" fill="#a2a2a2" stroke="#a2a2a2">Details</text>
<g transform="translate(1361.13,80.59) scale(0.68)"><g transform="translate(13.6 17.5) rotate(46)"><path d="M0 1L0 18.6" stroke="#98a1ab" stroke-width="1.6" stroke-linecap="round"/><ellipse cx="0" cy="1.3" rx="10" ry="3.9" fill="#b81c1c"/><ellipse cx="0" cy="0" rx="10" ry="3.9" fill="#e5393b"/><path d="M-4.6 0.6Q-2.6 -6 -3.4 -15L3.4 -15Q2.6 -6 4.6 0.6Z" fill="#d8282b"/><path d="M-1.9 0L-1.7 -15L-0.3 -15L-0.4 0Z" fill="#f47a7a" opacity=".6"/><ellipse cx="0" cy="-14.6" rx="6.3" ry="3.2" fill="#c42124"/><ellipse cx="0" cy="-16" rx="6.3" ry="3.2" fill="#ea3d40"/></g></g>
<circle cx="1598.2" cy="129.91" r="5.34" fill="#78788a" stroke="#000" stroke-width="1.33"/>
<text x="1584.86" y="136.66" font-size="16.01" fill="#aaaaaa" stroke="#aaaaaa" text-anchor="end">OPT_CONNECTION</text>
<rect x="1283.31" y="145.92" width="306.87" height="26.69" rx="13.34" fill="#222222" stroke="#666666" stroke-width="1.33"/>
<path d="M1580.85 159.26l-9.34 8.01v-4h-9.34v-8.01h9.34v-4Z" fill="#8899aa" stroke="#8899aa" stroke-width="1.33" stroke-linejoin="round"/>
<path d="M1552.83 145.92v26.69" stroke="#666666" stroke-width="1.33"/>
<circle cx="1533.88" cy="159.26" r="9.61" fill="#333"/>
<text x="1518.93" y="164.6" font-size="16.01" fill="#9b9b9b" stroke="#9b9b9b" text-anchor="end">no</text>
<text x="1296.66" y="164.6" font-size="16.01" fill="#9b9b9b" stroke="#9b9b9b">Enable PAG</text>
<path d="M1273.97 258.1H1599.53A10.67 10.67 0 0 1 1610.2 268.77V406.9H1263.3V268.77A10.67 10.67 0 0 1 1273.97 258.1Z" fill="#593930" filter="url(#sh)"/>
<path d="M1273.97 258.1H1599.53A10.67 10.67 0 0 1 1610.2 268.77V298.13H1263.3V268.77A10.67 10.67 0 0 1 1273.97 258.1Z" fill="#332922"/>
<rect x="1263.3" y="297.03" width="346.9" height="2.2" fill="#000" fill-opacity=".17"/>
<circle cx="1283.31" cy="278.11" r="6.67" fill="#666"/>
<text x="1303.33" y="284.79" font-size="18.68" fill="#a2a2a2" stroke="#a2a2a2">Upscaler</text>
<g transform="translate(1377.74,267.49) scale(0.68)"><g transform="translate(13.6 17.5) rotate(46)"><path d="M0 1L0 18.6" stroke="#98a1ab" stroke-width="1.6" stroke-linecap="round"/><ellipse cx="0" cy="1.3" rx="10" ry="3.9" fill="#b81c1c"/><ellipse cx="0" cy="0" rx="10" ry="3.9" fill="#e5393b"/><path d="M-4.6 0.6Q-2.6 -6 -3.4 -15L3.4 -15Q2.6 -6 4.6 0.6Z" fill="#d8282b"/><path d="M-1.9 0L-1.7 -15L-0.3 -15L-0.4 0Z" fill="#f47a7a" opacity=".6"/><ellipse cx="0" cy="-14.6" rx="6.3" ry="3.2" fill="#c42124"/><ellipse cx="0" cy="-16" rx="6.3" ry="3.2" fill="#ea3d40"/></g></g>
<circle cx="1598.2" cy="316.81" r="5.34" fill="#78788a" stroke="#000" stroke-width="1.33"/>
<text x="1584.86" y="323.56" font-size="16.01" fill="#aaaaaa" stroke="#aaaaaa" text-anchor="end">OPT_CONNECTION</text>
<rect x="1283.31" y="332.82" width="306.87" height="26.69" rx="13.34" fill="#222222" stroke="#666666" stroke-width="1.33"/>
<path d="M1580.85 346.16l-9.34 8.01v-4h-9.34v-8.01h9.34v-4Z" fill="#8899aa" stroke="#8899aa" stroke-width="1.33" stroke-linejoin="round"/>
<path d="M1552.83 332.82v26.69" stroke="#666666" stroke-width="1.33"/>
<circle cx="1533.88" cy="346.16" r="9.61" fill="#333"/>
<text x="1518.93" y="351.5" font-size="16.01" fill="#9b9b9b" stroke="#9b9b9b" text-anchor="end">no</text>
<text x="1296.66" y="351.5" font-size="16.01" fill="#9b9b9b" stroke="#9b9b9b">Enable Ultimate</text>
<rect x="1283.31" y="364.84" width="306.87" height="26.69" rx="13.34" fill="#222222" stroke="#666666" stroke-width="1.33"/>
<path d="M1580.85 378.19l-9.34 8.01v-4h-9.34v-8.01h9.34v-4Z" fill="#8899aa" stroke="#8899aa" stroke-width="1.33" stroke-linejoin="round"/>
<path d="M1552.83 364.84v26.69" stroke="#666666" stroke-width="1.33"/>
<circle cx="1533.88" cy="378.19" r="9.61" fill="#333"/>
<text x="1518.93" y="383.52" font-size="16.01" fill="#9b9b9b" stroke="#9b9b9b" text-anchor="end">no</text>
<text x="1296.66" y="383.52" font-size="16.01" fill="#9b9b9b" stroke="#9b9b9b">Enable DMD2</text>
<path d="M432.97 325H705.33A10.67 10.67 0 0 1 716 335.67V537.9H422.3V335.67A10.67 10.67 0 0 1 432.97 325Z" fill="#353535" filter="url(#sh)"/>
<path d="M432.97 325H705.33A10.67 10.67 0 0 1 716 335.67V365.03H422.3V335.67A10.67 10.67 0 0 1 432.97 325Z" fill="#333333"/>
<rect x="422.3" y="363.93" width="293.7" height="2.2" fill="#000" fill-opacity=".17"/>
<circle cx="442.31" cy="345.01" r="6.67" fill="#666"/>
<text x="462.33" y="351.69" font-size="18.68" fill="#a2a2a2" stroke="#a2a2a2">Seed (rgthree)</text>
<g transform="translate(583.48,334.39) scale(0.68)"><g transform="translate(13.6 17.5) rotate(46)"><path d="M0 1L0 18.6" stroke="#98a1ab" stroke-width="1.6" stroke-linecap="round"/><ellipse cx="0" cy="1.3" rx="10" ry="3.9" fill="#b81c1c"/><ellipse cx="0" cy="0" rx="10" ry="3.9" fill="#e5393b"/><path d="M-4.6 0.6Q-2.6 -6 -3.4 -15L3.4 -15Q2.6 -6 4.6 0.6Z" fill="#d8282b"/><path d="M-1.9 0L-1.7 -15L-0.3 -15L-0.4 0Z" fill="#f47a7a" opacity=".6"/><ellipse cx="0" cy="-14.6" rx="6.3" ry="3.2" fill="#c42124"/><ellipse cx="0" cy="-16" rx="6.3" ry="3.2" fill="#ea3d40"/></g></g>
<circle cx="704" cy="383.71" r="5.34" fill="#2e6c9f" stroke="#000" stroke-width="1.33"/>
<text x="690.66" y="390.46" font-size="16.01" fill="#aaaaaa" stroke="#aaaaaa" text-anchor="end">SEED</text>
<rect x="442.31" y="399.72" width="253.67" height="26.69" rx="13.34" fill="#222222" stroke="#666666" stroke-width="1.33"/>
<path d="M463.66 406.39L450.32 413.06L463.66 419.74Z" fill="#dedede"/>
<path d="M674.64 406.39L687.98 413.06L674.64 419.74Z" fill="#dedede"/>
<text x="469" y="418.4" font-size="16.01" fill="#9b9b9b" stroke="#9b9b9b">seed</text>
<text x="649.28" y="418.4" font-size="16.01" fill="#dedede" stroke="#dedede" text-anchor="end">-1</text>
<rect x="442.31" y="431.74" width="253.67" height="26.69" fill="#222222" stroke="#666666" stroke-width="1.33"/>
<g transform="translate(476.13,434.12) scale(1.02)"><path d="M10 0.8 L18.6 4.2 Q19.4 4.6 19.3 5.6 L18.4 14.6 Q18.3 15.6 17.4 16.1 L9.6 19.6 Q8.8 19.9 8 19.4 L1.6 14.4 Q0.9 13.8 0.9 12.9 L1 5.2 Q1 4.3 1.9 3.9 L9 0.8 Q9.5 0.6 10 0.8 Z" fill="#cfcfcf"/><path d="M1.3 4.6 L9.4 8.4 L9 19.6 Q8.5 19.7 8 19.4 L1.6 14.4 Q0.9 13.8 0.9 12.9 L1 5.2 Q1 4.8 1.3 4.6Z" fill="#d9d9d9"/><path d="M9.4 8.4 L19.1 4.6 Q19.4 5 19.3 5.6 L18.4 14.6 Q18.3 15.6 17.4 16.1 L9.6 19.6 L9 19.6 Z" fill="#bdbdbd"/><path d="M1.3 4.6 Q1.5 4.1 1.9 3.9 L9 0.8 Q9.5 0.6 10 0.8 L18.6 4.2 Q19 4.4 19.1 4.6 L9.4 8.4 Z" fill="#efefef"/><ellipse cx="10" cy="4.2" rx="1.7" ry="1" fill="#e33b3b"/><ellipse cx="3.3" cy="8.6" rx=".8" ry="1.25" fill="#222"/><ellipse cx="6.4" cy="15" rx=".8" ry="1.25" fill="#222"/><ellipse cx="16.6" cy="7.6" rx=".85" ry="1.25" fill="#222" transform="rotate(20 16.6 7.6)"/><ellipse cx="14" cy="11.6" rx=".85" ry="1.25" fill="#222" transform="rotate(20 14 11.6)"/><ellipse cx="11.6" cy="15.6" rx=".85" ry="1.25" fill="#222" transform="rotate(20 11.6 15.6)"/></g>
<text x="501.08" y="450.42" font-size="16.01" fill="#dedede" stroke="#dedede">Randomize Each Time</text>
<rect x="442.31" y="463.77" width="253.67" height="26.69" fill="#222222" stroke="#666666" stroke-width="1.33"/>
<g transform="translate(486.37,466.15) scale(1.02)"><path d="M10 0.8 L18.6 4.2 Q19.4 4.6 19.3 5.6 L18.4 14.6 Q18.3 15.6 17.4 16.1 L9.6 19.6 Q8.8 19.9 8 19.4 L1.6 14.4 Q0.9 13.8 0.9 12.9 L1 5.2 Q1 4.3 1.9 3.9 L9 0.8 Q9.5 0.6 10 0.8 Z" fill="#cfcfcf"/><path d="M1.3 4.6 L9.4 8.4 L9 19.6 Q8.5 19.7 8 19.4 L1.6 14.4 Q0.9 13.8 0.9 12.9 L1 5.2 Q1 4.8 1.3 4.6Z" fill="#d9d9d9"/><path d="M9.4 8.4 L19.1 4.6 Q19.4 5 19.3 5.6 L18.4 14.6 Q18.3 15.6 17.4 16.1 L9.6 19.6 L9 19.6 Z" fill="#bdbdbd"/><path d="M1.3 4.6 Q1.5 4.1 1.9 3.9 L9 0.8 Q9.5 0.6 10 0.8 L18.6 4.2 Q19 4.4 19.1 4.6 L9.4 8.4 Z" fill="#efefef"/><ellipse cx="10" cy="4.2" rx="1.7" ry="1" fill="#e33b3b"/><ellipse cx="3.3" cy="8.6" rx=".8" ry="1.25" fill="#222"/><ellipse cx="6.4" cy="15" rx=".8" ry="1.25" fill="#222"/><ellipse cx="16.6" cy="7.6" rx=".85" ry="1.25" fill="#222" transform="rotate(20 16.6 7.6)"/><ellipse cx="14" cy="11.6" rx=".85" ry="1.25" fill="#222" transform="rotate(20 14 11.6)"/><ellipse cx="11.6" cy="15.6" rx=".85" ry="1.25" fill="#222" transform="rotate(20 11.6 15.6)"/></g>
<text x="511.32" y="482.45" font-size="16.01" fill="#dedede" stroke="#dedede">New Fixed Random</text>
<rect x="442.31" y="495.79" width="253.67" height="26.69" fill="#222222" stroke="#666666" stroke-width="1.33"/>
<text x="500.14" y="516.87" font-size="24.5" fill="#27b327" stroke="#27b327" stroke-width=".7" text-anchor="middle" class="dj">♻</text>
<text x="514.84" y="514.47" font-size="16.01" fill="#dedede" stroke="#dedede">875834919332307</text>
<path d="M740.27 471.4H1239.43A10.67 10.67 0 0 1 1250.1 482.07V1045.2H729.6V482.07A10.67 10.67 0 0 1 740.27 471.4Z" fill="#335533" filter="url(#sh)"/>
<path d="M740.27 471.4H1239.43A10.67 10.67 0 0 1 1250.1 482.07V511.43H729.6V482.07A10.67 10.67 0 0 1 740.27 471.4Z" fill="#223322"/>
<rect x="729.6" y="510.33" width="520.5" height="2.2" fill="#000" fill-opacity=".17"/>
<circle cx="749.61" cy="491.41" r="6.67" fill="#666"/>
<text x="769.63" y="498.09" font-size="18.68" fill="#a2a2a2" stroke="#a2a2a2">Prompt</text>
<g transform="translate(830.54,480.79) scale(0.68)"><g transform="translate(13.6 17.5) rotate(46)"><path d="M0 1L0 18.6" stroke="#98a1ab" stroke-width="1.6" stroke-linecap="round"/><ellipse cx="0" cy="1.3" rx="10" ry="3.9" fill="#b81c1c"/><ellipse cx="0" cy="0" rx="10" ry="3.9" fill="#e5393b"/><path d="M-4.6 0.6Q-2.6 -6 -3.4 -15L3.4 -15Q2.6 -6 4.6 0.6Z" fill="#d8282b"/><path d="M-1.9 0L-1.7 -15L-0.3 -15L-0.4 0Z" fill="#f47a7a" opacity=".6"/><ellipse cx="0" cy="-14.6" rx="6.3" ry="3.2" fill="#c42124"/><ellipse cx="0" cy="-16" rx="6.3" ry="3.2" fill="#ea3d40"/></g></g>
<circle cx="1238.1" cy="530.11" r="5.34" fill="#7bc22d" stroke="#000" stroke-width="1.33"/>
<text x="1224.76" y="536.86" font-size="16.01" fill="#aaaaaa" stroke="#aaaaaa" text-anchor="end">string</text>
<rect x="742.6" y="559.8" width="494.3" height="473.1" fill="#222"/>
<text x="745.9" y="574.8" font-size="13.34" fill="#9a9a9a" stroke="#9a9a9a" class="mono">string</text>
<path d="M1273.97 471.8H1599.53A10.67 10.67 0 0 1 1610.2 482.47V858.8H1263.3V482.47A10.67 10.67 0 0 1 1273.97 471.8Z" fill="#333355" filter="url(#sh)"/>
<path d="M1273.97 471.8H1599.53A10.67 10.67 0 0 1 1610.2 482.47V511.83H1263.3V482.47A10.67 10.67 0 0 1 1273.97 471.8Z" fill="#222233"/>
<rect x="1263.3" y="510.73" width="346.9" height="2.2" fill="#000" fill-opacity=".17"/>
<circle cx="1283.31" cy="491.81" r="6.67" fill="#666"/>
<text x="1303.33" y="498.49" font-size="18.68" fill="#a2a2a2" stroke="#a2a2a2">Model and settings</text>
<g transform="translate(1460.83,481.19) scale(0.68)"><g transform="translate(13.6 17.5) rotate(46)"><path d="M0 1L0 18.6" stroke="#98a1ab" stroke-width="1.6" stroke-linecap="round"/><ellipse cx="0" cy="1.3" rx="10" ry="3.9" fill="#b81c1c"/><ellipse cx="0" cy="0" rx="10" ry="3.9" fill="#e5393b"/><path d="M-4.6 0.6Q-2.6 -6 -3.4 -15L3.4 -15Q2.6 -6 4.6 0.6Z" fill="#d8282b"/><path d="M-1.9 0L-1.7 -15L-0.3 -15L-0.4 0Z" fill="#f47a7a" opacity=".6"/><ellipse cx="0" cy="-14.6" rx="6.3" ry="3.2" fill="#c42124"/><ellipse cx="0" cy="-16" rx="6.3" ry="3.2" fill="#ea3d40"/></g></g>
<circle cx="1598.2" cy="530.51" r="5.34" fill="#78788a" stroke="#000" stroke-width="1.33"/>
<text x="1584.86" y="537.26" font-size="16.01" fill="#aaaaaa" stroke="#aaaaaa" text-anchor="end">OPT_CONNECTION</text>
<rect x="1283.31" y="546.52" width="306.87" height="26.69" rx="13.34" fill="#222222" stroke="#666666" stroke-width="1.33"/>
<path d="M1580.85 559.86l-9.34 8.01v-4h-9.34v-8.01h9.34v-4Z" fill="#8899aa" stroke="#8899aa" stroke-width="1.33" stroke-linejoin="round"/>
<path d="M1552.83 546.52v26.69" stroke="#666666" stroke-width="1.33"/>
<circle cx="1533.88" cy="559.86" r="9.61" fill="#333"/>
<text x="1518.93" y="565.2" font-size="16.01" fill="#9b9b9b" stroke="#9b9b9b" text-anchor="end">no</text>
<text x="1296.66" y="565.2" font-size="16.01" fill="#9b9b9b" stroke="#9b9b9b">Enable Pixel Alchemy</text>
<rect x="1283.31" y="578.54" width="306.87" height="26.69" rx="13.34" fill="#222222" stroke="#666666" stroke-width="1.33"/>
<path d="M1580.85 591.89l-9.34 8.01v-4h-9.34v-8.01h9.34v-4Z" fill="#8899aa" stroke="#8899aa" stroke-width="1.33" stroke-linejoin="round"/>
<path d="M1552.83 578.54v26.69" stroke="#666666" stroke-width="1.33"/>
<circle cx="1533.88" cy="591.89" r="9.61" fill="#333"/>
<text x="1518.93" y="597.22" font-size="16.01" fill="#9b9b9b" stroke="#9b9b9b" text-anchor="end">no</text>
<text x="1296.66" y="597.22" font-size="16.01" fill="#9b9b9b" stroke="#9b9b9b">Enable Toon</text>
<rect x="1283.31" y="610.57" width="306.87" height="26.69" rx="13.34" fill="#222222" stroke="#666666" stroke-width="1.33"/>
<path d="M1580.85 623.91l-9.34 8.01v-4h-9.34v-8.01h9.34v-4Z" fill="#8899aa" stroke="#8899aa" stroke-width="1.33" stroke-linejoin="round"/>
<path d="M1552.83 610.57v26.69" stroke="#666666" stroke-width="1.33"/>
<circle cx="1533.88" cy="623.91" r="9.61" fill="#333"/>
<text x="1518.93" y="629.25" font-size="16.01" fill="#9b9b9b" stroke="#9b9b9b" text-anchor="end">no</text>
<text x="1296.66" y="629.25" font-size="16.01" fill="#9b9b9b" stroke="#9b9b9b">Enable PlantMilk Hemp 2</text>
<rect x="1283.31" y="642.59" width="306.87" height="26.69" rx="13.34" fill="#222222" stroke="#666666" stroke-width="1.33"/>
<path d="M1580.85 655.93l-9.34 8.01v-4h-9.34v-8.01h9.34v-4Z" fill="#8899aa" stroke="#8899aa" stroke-width="1.33" stroke-linejoin="round"/>
<path d="M1552.83 642.59v26.69" stroke="#666666" stroke-width="1.33"/>
<circle cx="1533.88" cy="655.93" r="9.61" fill="#333"/>
<text x="1518.93" y="661.27" font-size="16.01" fill="#9b9b9b" stroke="#9b9b9b" text-anchor="end">no</text>
<text x="1296.66" y="661.27" font-size="16.01" fill="#9b9b9b" stroke="#9b9b9b">Enable Hyphoria Real</text>
<rect x="1283.31" y="674.61" width="306.87" height="26.69" rx="13.34" fill="#222222" stroke="#666666" stroke-width="1.33"/>
<path d="M1580.85 687.96l-9.34 8.01v-4h-9.34v-8.01h9.34v-4Z" fill="#8899aa" stroke="#8899aa" stroke-width="1.33" stroke-linejoin="round"/>
<path d="M1552.83 674.61v26.69" stroke="#666666" stroke-width="1.33"/>
<circle cx="1533.88" cy="687.96" r="9.61" fill="#333"/>
<text x="1518.93" y="693.29" font-size="16.01" fill="#9b9b9b" stroke="#9b9b9b" text-anchor="end">no</text>
<text x="1296.66" y="693.29" font-size="16.01" fill="#9b9b9b" stroke="#9b9b9b">Enable Equinox</text>
<rect x="1283.31" y="706.64" width="306.87" height="26.69" rx="13.34" fill="#222222" stroke="#666666" stroke-width="1.33"/>
<path d="M1580.85 719.98l-9.34 8.01v-4h-9.34v-8.01h9.34v-4Z" fill="#8899aa" stroke="#8899aa" stroke-width="1.33" stroke-linejoin="round"/>
<path d="M1552.83 706.64v26.69" stroke="#666666" stroke-width="1.33"/>
<circle cx="1533.88" cy="719.98" r="9.61" fill="#8899aa"/>
<text x="1518.93" y="725.32" font-size="16.01" fill="#f0f0f0" stroke="#f0f0f0" text-anchor="end">yes</text>
<text x="1296.66" y="725.32" font-size="16.01" fill="#f0f0f0" stroke="#f0f0f0">Enable PlantMilk Walnut</text>
<rect x="1283.31" y="738.66" width="306.87" height="26.69" rx="13.34" fill="#222222" stroke="#666666" stroke-width="1.33"/>
<path d="M1580.85 752l-9.34 8.01v-4h-9.34v-8.01h9.34v-4Z" fill="#8899aa" stroke="#8899aa" stroke-width="1.33" stroke-linejoin="round"/>
<path d="M1552.83 738.66v26.69" stroke="#666666" stroke-width="1.33"/>
<circle cx="1533.88" cy="752" r="9.61" fill="#333"/>
<text x="1518.93" y="757.34" font-size="16.01" fill="#9b9b9b" stroke="#9b9b9b" text-anchor="end">no</text>
<text x="1296.66" y="757.34" font-size="16.01" fill="#9b9b9b" stroke="#9b9b9b">Enable Magic IL</text>
<rect x="1283.31" y="770.68" width="306.87" height="26.69" rx="13.34" fill="#222222" stroke="#666666" stroke-width="1.33"/>
<path d="M1580.85 784.03l-9.34 8.01v-4h-9.34v-8.01h9.34v-4Z" fill="#8899aa" stroke="#8899aa" stroke-width="1.33" stroke-linejoin="round"/>
<path d="M1552.83 770.68v26.69" stroke="#666666" stroke-width="1.33"/>
<circle cx="1533.88" cy="784.03" r="9.61" fill="#333"/>
<text x="1518.93" y="789.36" font-size="16.01" fill="#9b9b9b" stroke="#9b9b9b" text-anchor="end">no</text>
<text x="1296.66" y="789.36" font-size="16.01" fill="#9b9b9b" stroke="#9b9b9b">Enable NAIXL</text>
<rect x="1283.31" y="802.71" width="306.87" height="26.69" rx="13.34" fill="#222222" stroke="#666666" stroke-width="1.33"/>
<path d="M1580.85 816.05l-9.34 8.01v-4h-9.34v-8.01h9.34v-4Z" fill="#8899aa" stroke="#8899aa" stroke-width="1.33" stroke-linejoin="round"/>
<path d="M1552.83 802.71v26.69" stroke="#666666" stroke-width="1.33"/>
<circle cx="1533.88" cy="816.05" r="9.61" fill="#333"/>
<text x="1518.93" y="821.39" font-size="16.01" fill="#9b9b9b" stroke="#9b9b9b" text-anchor="end">no</text>
<text x="1296.66" y="821.39" font-size="16.01" fill="#9b9b9b" stroke="#9b9b9b">Enable matrixH</text>
<path d="M432.97 551.7H705.33A10.67 10.67 0 0 1 716 562.37V711.6H422.3V562.37A10.67 10.67 0 0 1 432.97 551.7Z" fill="#553355" filter="url(#sh)"/>
<path d="M432.97 551.7H705.33A10.67 10.67 0 0 1 716 562.37V591.73H422.3V562.37A10.67 10.67 0 0 1 432.97 551.7Z" fill="#332233"/>
<rect x="422.3" y="590.63" width="293.7" height="2.2" fill="#000" fill-opacity=".17"/>
<circle cx="442.31" cy="571.71" r="6.67" fill="#666"/>
<text x="462.33" y="578.39" font-size="18.68" fill="#a2a2a2" stroke="#a2a2a2">Prompt</text>
<circle cx="704" cy="610.41" r="5.34" fill="#78788a" stroke="#000" stroke-width="1.33"/>
<text x="690.66" y="617.16" font-size="16.01" fill="#aaaaaa" stroke="#aaaaaa" text-anchor="end">OPT_CONNECTION</text>
<rect x="442.31" y="626.42" width="253.67" height="26.69" rx="13.34" fill="#222222" stroke="#666666" stroke-width="1.33"/>
<path d="M686.65 639.76l-9.34 8.01v-4h-9.34v-8.01h9.34v-4Z" fill="#8899aa" stroke="#8899aa" stroke-width="1.33" stroke-linejoin="round"/>
<path d="M658.63 626.42v26.69" stroke="#666666" stroke-width="1.33"/>
<circle cx="639.68" cy="639.76" r="9.61" fill="#333"/>
<text x="624.73" y="645.1" font-size="16.01" fill="#9b9b9b" stroke="#9b9b9b" text-anchor="end">no</text>
<text x="455.66" y="645.1" font-size="16.01" fill="#9b9b9b" stroke="#9b9b9b">Enable Random</text>
<rect x="442.31" y="658.44" width="253.67" height="26.69" rx="13.34" fill="#222222" stroke="#666666" stroke-width="1.33"/>
<path d="M686.65 671.79l-9.34 8.01v-4h-9.34v-8.01h9.34v-4Z" fill="#8899aa" stroke="#8899aa" stroke-width="1.33" stroke-linejoin="round"/>
<path d="M658.63 658.44v26.69" stroke="#666666" stroke-width="1.33"/>
<circle cx="639.68" cy="671.79" r="9.61" fill="#333"/>
<text x="624.73" y="677.12" font-size="16.01" fill="#9b9b9b" stroke="#9b9b9b" text-anchor="end">no</text>
<text x="455.66" y="677.12" font-size="16.01" fill="#9b9b9b" stroke="#9b9b9b">Enable Describe</text>
<path d="M45.77 591.4H398.43A10.67 10.67 0 0 1 409.1 602.07V701.23A10.67 10.67 0 0 1 398.43 711.9H45.77A10.67 10.67 0 0 1 35.1 701.23V602.07A10.67 10.67 0 0 1 45.77 591.4Z" fill="#353535" filter="url(#sh)"/>
<path d="M45.77 591.4H398.43A10.67 10.67 0 0 1 409.1 602.07V631.43H35.1V602.07A10.67 10.67 0 0 1 45.77 591.4Z" fill="#333333"/>
<rect x="35.1" y="630.33" width="374" height="2.2" fill="#000" fill-opacity=".17"/>
<circle cx="55.11" cy="611.41" r="6.67" fill="#666"/>
<text x="75.13" y="618.09" font-size="18.68" fill="#a2a2a2" stroke="#a2a2a2">Denoise</text>
<g transform="translate(144.37,600.79) scale(0.68)"><g transform="translate(13.6 17.5) rotate(46)"><path d="M0 1L0 18.6" stroke="#98a1ab" stroke-width="1.6" stroke-linecap="round"/><ellipse cx="0" cy="1.3" rx="10" ry="3.9" fill="#b81c1c"/><ellipse cx="0" cy="0" rx="10" ry="3.9" fill="#e5393b"/><path d="M-4.6 0.6Q-2.6 -6 -3.4 -15L3.4 -15Q2.6 -6 4.6 0.6Z" fill="#d8282b"/><path d="M-1.9 0L-1.7 -15L-0.3 -15L-0.4 0Z" fill="#f47a7a" opacity=".6"/><ellipse cx="0" cy="-14.6" rx="6.3" ry="3.2" fill="#c42124"/><ellipse cx="0" cy="-16" rx="6.3" ry="3.2" fill="#ea3d40"/></g></g>
<circle cx="397.1" cy="650.11" r="5.34" fill="#7bfd7c" stroke="#000" stroke-width="1.33"/>
<text x="383.76" y="656.86" font-size="16.01" fill="#aaaaaa" stroke="#aaaaaa" text-anchor="end">float</text>
<rect x="55.11" y="666.12" width="333.97" height="26.69" rx="13.34" fill="#222222" stroke="#666666" stroke-width="1.33"/>
<path d="M76.46 672.79L63.12 679.46L76.46 686.14Z" fill="#dedede"/>
<path d="M367.74 672.79L381.08 679.46L367.74 686.14Z" fill="#dedede"/>
<text x="81.8" y="684.8" font-size="16.01" fill="#9b9b9b" stroke="#9b9b9b">float</text>
<text x="342.38" y="684.8" font-size="16.01" fill="#dedede" stroke="#dedede" text-anchor="end">1.00</text>
<path d="M45.77 725.4H318.23A10.67 10.67 0 0 1 328.9 736.07V1076.8H35.1V736.07A10.67 10.67 0 0 1 45.77 725.4Z" fill="#353535" filter="url(#sh)"/>
<path d="M45.77 725.4H318.23A10.67 10.67 0 0 1 328.9 736.07V765.43H35.1V736.07A10.67 10.67 0 0 1 45.77 725.4Z" fill="#333333"/>
<rect x="35.1" y="764.33" width="293.8" height="2.2" fill="#000" fill-opacity=".17"/>
<circle cx="55.11" cy="745.41" r="6.67" fill="#666"/>
<text x="75.13" y="752.09" font-size="18.68" fill="#a2a2a2" stroke="#a2a2a2">KSampler Config</text>
<g transform="translate(217.04,734.79) scale(0.68)"><g transform="translate(13.6 17.5) rotate(46)"><path d="M0 1L0 18.6" stroke="#98a1ab" stroke-width="1.6" stroke-linecap="round"/><ellipse cx="0" cy="1.3" rx="10" ry="3.9" fill="#b81c1c"/><ellipse cx="0" cy="0" rx="10" ry="3.9" fill="#e5393b"/><path d="M-4.6 0.6Q-2.6 -6 -3.4 -15L3.4 -15Q2.6 -6 4.6 0.6Z" fill="#d8282b"/><path d="M-1.9 0L-1.7 -15L-0.3 -15L-0.4 0Z" fill="#f47a7a" opacity=".6"/><ellipse cx="0" cy="-14.6" rx="6.3" ry="3.2" fill="#c42124"/><ellipse cx="0" cy="-16" rx="6.3" ry="3.2" fill="#ea3d40"/></g></g>
<circle cx="316.9" cy="784.11" r="5.34" fill="#2e6c9f" stroke="#000" stroke-width="1.33"/>
<text x="303.56" y="790.86" font-size="16.01" fill="#aaaaaa" stroke="#aaaaaa" text-anchor="end">STEPS</text>
<circle cx="316.9" cy="810.8" r="5.34" fill="#2e6c9f" stroke="#000" stroke-width="1.33"/>
<text x="303.56" y="817.55" font-size="16.01" fill="#aaaaaa" stroke="#aaaaaa" text-anchor="end">REFINER_STEP</text>
<circle cx="316.9" cy="837.48" r="5.34" fill="#78788a" stroke="#000" stroke-width="1.33"/>
<text x="303.56" y="844.23" font-size="16.01" fill="#aaaaaa" stroke="#aaaaaa" text-anchor="end">CFG</text>
<circle cx="316.9" cy="864.17" r="5.34" fill="#78788a" stroke="#000" stroke-width="1.33"/>
<text x="303.56" y="870.92" font-size="16.01" fill="#aaaaaa" stroke="#aaaaaa" text-anchor="end">SAMPLER</text>
<circle cx="316.9" cy="890.85" r="5.34" fill="#7bfd7c" stroke="#000" stroke-width="1.33"/>
<text x="303.56" y="897.6" font-size="16.01" fill="#aaaaaa" stroke="#aaaaaa" text-anchor="end">SCHEDULER</text>
<rect x="55.11" y="906.86" width="253.77" height="26.69" rx="13.34" fill="#222222" stroke="#666666" stroke-width="1.33"/>
<path d="M76.46 913.54L63.12 920.21L76.46 926.88Z" fill="#dedede"/>
<path d="M287.54 913.54L300.88 920.21L287.54 926.88Z" fill="#dedede"/>
<text x="81.8" y="925.54" font-size="16.01" fill="#9b9b9b" stroke="#9b9b9b">steps_total</text>
<text x="262.18" y="925.54" font-size="16.01" fill="#dedede" stroke="#dedede" text-anchor="end">28</text>
<rect x="55.11" y="938.89" width="253.77" height="26.69" rx="13.34" fill="#222222" stroke="#666666" stroke-width="1.33"/>
<path d="M76.46 945.56L63.12 952.23L76.46 958.9Z" fill="#dedede"/>
<path d="M287.54 945.56L300.88 952.23L287.54 958.9Z" fill="#dedede"/>
<text x="81.8" y="957.57" font-size="16.01" fill="#9b9b9b" stroke="#9b9b9b">refiner_step</text>
<text x="262.18" y="957.57" font-size="16.01" fill="#dedede" stroke="#dedede" text-anchor="end">25</text>
<rect x="55.11" y="970.91" width="253.77" height="26.69" rx="13.34" fill="#222222" fill-opacity=".5"/>
<text x="81.8" y="989.59" font-size="16.01" fill="#666666" stroke="#666666">cfg</text>
<circle cx="48.6" cy="984.25" r="5.54" fill="#7bfd7c"/>
<rect x="55.11" y="1002.93" width="253.77" height="26.69" rx="13.34" fill="#222222" fill-opacity=".5"/>
<text x="81.8" y="1021.61" font-size="16.01" fill="#666666" stroke="#666666">sampler_name</text>
<circle cx="48.6" cy="1016.28" r="5.54" fill="#7bfd7c"/>
<rect x="55.11" y="1034.96" width="253.77" height="26.69" rx="13.34" fill="#222222" fill-opacity=".5"/>
<text x="81.8" y="1053.64" font-size="16.01" fill="#666666" stroke="#666666">scheduler</text>
<circle cx="48.6" cy="1048.3" r="5.54" fill="#7bfd7c"/>
<path d="M352.87 725.2H705.33A10.67 10.67 0 0 1 716 735.87V1045.1H342.2V735.87A10.67 10.67 0 0 1 352.87 725.2Z" fill="#553333" filter="url(#sh)"/>
<path d="M352.87 725.2H705.33A10.67 10.67 0 0 1 716 735.87V765.23H342.2V735.87A10.67 10.67 0 0 1 352.87 725.2Z" fill="#332222"/>
<rect x="342.2" y="764.13" width="373.8" height="2.2" fill="#000" fill-opacity=".17"/>
<circle cx="362.21" cy="745.21" r="6.67" fill="#666"/>
<text x="382.23" y="751.89" font-size="18.68" fill="#a2a2a2" stroke="#a2a2a2">Negative prompt</text>
<g transform="translate(519.99,734.59) scale(0.68)"><g transform="translate(13.6 17.5) rotate(46)"><path d="M0 1L0 18.6" stroke="#98a1ab" stroke-width="1.6" stroke-linecap="round"/><ellipse cx="0" cy="1.3" rx="10" ry="3.9" fill="#b81c1c"/><ellipse cx="0" cy="0" rx="10" ry="3.9" fill="#e5393b"/><path d="M-4.6 0.6Q-2.6 -6 -3.4 -15L3.4 -15Q2.6 -6 4.6 0.6Z" fill="#d8282b"/><path d="M-1.9 0L-1.7 -15L-0.3 -15L-0.4 0Z" fill="#f47a7a" opacity=".6"/><ellipse cx="0" cy="-14.6" rx="6.3" ry="3.2" fill="#c42124"/><ellipse cx="0" cy="-16" rx="6.3" ry="3.2" fill="#ea3d40"/></g></g>
<circle cx="704" cy="783.91" r="5.34" fill="#7bc22d" stroke="#000" stroke-width="1.33"/>
<text x="690.66" y="790.66" font-size="16.01" fill="#aaaaaa" stroke="#aaaaaa" text-anchor="end">string</text>
<rect x="356" y="813" width="347.5" height="218.8" fill="#222"/>
<text x="359.3" y="828" font-size="13.34" fill="#dddddd" stroke="#dddddd" class="mono">young, teen, nsfw, r18</text>
</svg>
</body></html>
